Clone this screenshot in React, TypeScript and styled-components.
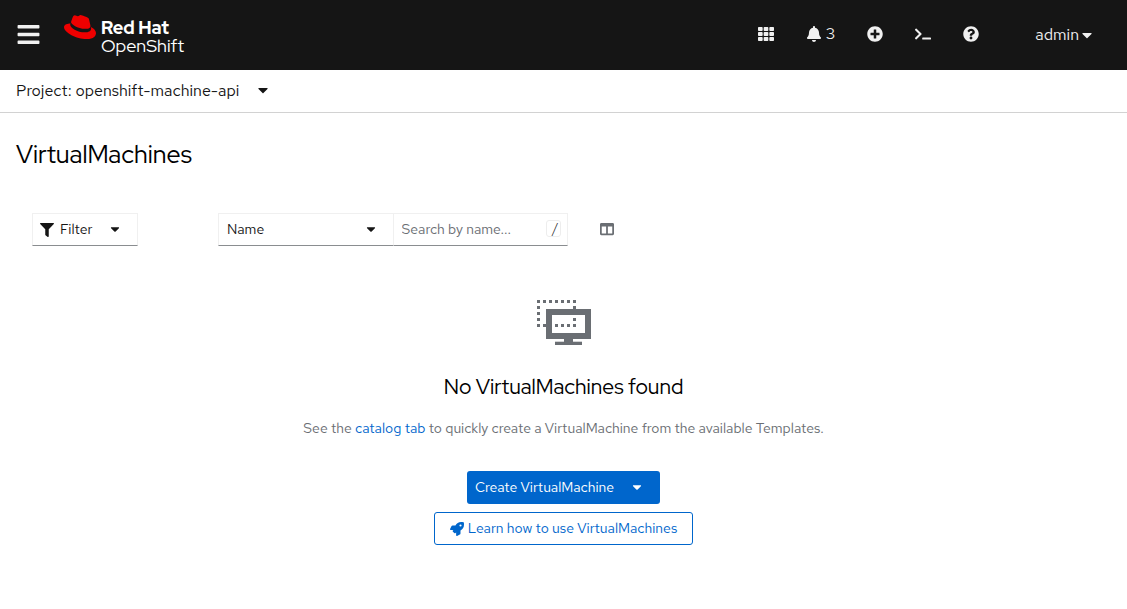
import React from "react";
import styled, { createGlobalStyle } from "styled-components";
import {
  FaBars,
  FaBell,
  FaCaretDown,
  FaColumns,
  FaFilter,
  FaPlusCircle,
  FaQuestionCircle,
  FaRedhat,
  FaRocket,
  FaTerminal,
  FaTh,
} from "react-icons/fa";

const bodyFont = `"Red Hat Text", "Open Sans", "Noto Sans", sans-serif`;
const displayFont = `"Red Hat Display", Lato, "Open Sans", sans-serif`;

const GlobalStyle = createGlobalStyle`
  *, *::before, *::after { box-sizing: border-box; }
  body {
    margin: 0;
    background: #fff;
    color: #151515;
    font-family: ${bodyFont};
    font-size: 14px;
    font-weight: 400;
    line-height: 21px;
  }
  button, input, select { font: inherit; color: inherit; }
  svg { display: block; flex: none; }
`;

const Masthead = styled.header`
  display: flex;
  align-items: center;
  height: 70px;
  padding: 0 32px 2px 16px;
  background: #151515;
  color: #f0f0f0;
`;

const PlainButton = styled.button`
  display: flex;
  align-items: center;
  gap: 4px;
  padding: 0;
  border: 0;
  background: none;
  font-size: 16px;
  line-height: 24px;
  cursor: pointer;
`;

const Caret = styled(FaCaretDown)`
  margin-bottom: 2px;
`;

const Brand = styled.a`
  display: flex;
  align-items: flex-start;
  gap: 5px;
  margin-left: 23px;
  color: #fff;
  text-decoration: none;
`;

const Hat = styled(FaRedhat)`
  color: #e00;
  margin-top: -2px;
`;

const BrandText = styled.span`
  display: flex;
  flex-direction: column;
  padding-top: 6px;
  font-family: ${displayFont};
  font-size: 18px;
  font-weight: 400;
  line-height: 18px;
`;

const BrandName = styled.strong`
  font-weight: 800;
`;

const Tools = styled.nav`
  display: flex;
  align-items: center;
  gap: 32px;
  margin-left: auto;
`;

const UserButton = styled(PlainButton)`
  gap: 0;
  margin-left: 24px;
  padding-top: 2px;
`;

const ProjectBar = styled.div`
  display: flex;
  padding: 9px 16px;
  border-bottom: 1px solid #d2d2d2;
`;

const ProjectButton = styled(PlainButton)`
  gap: 16px;
`;

const PageTitle = styled.h1`
  margin: 0;
  padding: 24px 16px;
  color: #000;
  font-family: ${displayFont};
  font-size: 25px;
  font-weight: 400;
  line-height: 36px;
`;

const Toolbar = styled.div`
  display: flex;
  flex-wrap: wrap;
  align-items: center;
  padding: 16px 32px;
`;

const FilterButton = styled.button`
  display: flex;
  align-items: center;
  gap: 6px;
  width: 106px;
  height: 33px;
  margin-right: 80px;
  padding: 0 7px;
  border: 1px solid #f0f0f0;
  border-bottom-color: #8a8d90;
  background: #fff;
  cursor: pointer;
`;

const FilterCaret = styled(Caret)`
  margin-left: 10px;
`;

const SearchGroup = styled.div`
  display: flex;
  width: 350px;
  margin-right: 32px;
`;

const Field = styled.label`
  display: flex;
  flex: 1;
  align-items: center;
  min-width: 0;
  height: 33px;
  padding: 0 6px 0 8px;
  border: 1px solid #f0f0f0;
  border-bottom-color: #8a8d90;
  & + & { border-left: 0; }
`;

const AttributeSelect = styled.select`
  flex: 1;
  min-width: 0;
  height: 31px;
  padding: 0;
  border: 0;
  outline: 0;
  appearance: none;
  background: none;
`;

const SelectCaret = styled(Caret)`
  margin-right: 9px;
`;

const SearchInput = styled.input`
  flex: 1;
  min-width: 0;
  padding: 0;
  border: 0;
  outline: 0;
  background: none;
  &::placeholder { color: #6a6e73; opacity: 1; }
`;

const Shortcut = styled.kbd`
  width: 15px;
  height: 17px;
  margin-bottom: 2px;
  padding-left: 4px;
  border: 1px solid #ededed;
  border-radius: 3px;
  font-family: ${bodyFont};
  font-size: 14px;
  font-weight: 300;
  line-height: 15px;
  text-align: center;
`;

const ColumnsButton = styled(PlainButton)`
  padding-bottom: 2px;
  color: #6a6e73;
`;

const EmptyState = styled.section`
  display: flex;
  flex-direction: column;
  align-items: center;
  padding: 38px 32px 64px;
  text-align: center;
`;

const EmptyTitle = styled.h2`
  margin: 27px 0 0;
  color: #000;
  font-family: ${displayFont};
  font-size: 21px;
  font-weight: 400;
  line-height: 30px;
`;

const EmptyText = styled.p`
  margin: 16px 0 32px;
  color: #6a6e73;
`;

const TextLink = styled.a`
  color: #06c;
  text-decoration: none;
`;

const CreateButton = styled.button`
  display: flex;
  align-items: center;
  gap: 16px;
  height: 33px;
  padding: 0 16px 0 8px;
  border: 0;
  border-radius: 3px;
  background: #06c;
  color: #fff;
  cursor: pointer;
`;

const LearnButton = styled.button`
  display: flex;
  align-items: center;
  gap: 4px;
  height: 33px;
  margin-top: 8px;
  padding: 0 15px;
  border: 1px solid #06c;
  border-radius: 3px;
  background: #fff;
  color: #06c;
  cursor: pointer;
`;

const dots = [
  ...[0, 6, 12, 18, 24, 30, 36].map((x) => [x, 0]),
  ...[6, 12, 18, 24].map((y) => [0, y]),
  ...[6, 18, 24, 30, 36].map((x) => [x, 24]),
  [36, 6],
  [36, 18],
];

function VirtualMachineIcon() {
  return (
    <svg width="54" height="45" viewBox="0 0 54 45" fill="#6a6e73" shapeRendering="crispEdges" aria-hidden="true">
      {dots.map(([x, y]) => (
        <rect key={`${x}-${y}`} x={x} y={y} width="3" height="3" />
      ))}
      <path fillRule="evenodd" d="M9 9h45v30H36v3h9v3H18v-3h9v-3H9zM15 15v18h33V15z" />
      <path d="M18 41h9v1h-9zM36 41h9v1h-9z" opacity="0.3" />
    </svg>
  );
}

export default function App() {
  return (
    <>
      <GlobalStyle />
      <Masthead>
        <PlainButton aria-label="Global navigation">
          <FaBars size={25} />
        </PlainButton>
        <Brand href="#">
          <Hat size={32} />
          <BrandText>
            <BrandName>Red Hat</BrandName>
            <span>OpenShift</span>
          </BrandText>
        </Brand>
        <Tools aria-label="Utilities">
          <PlainButton aria-label="Applications"><FaTh size={16} /></PlainButton>
          <PlainButton aria-label="3 notifications"><FaBell size={16} />3</PlainButton>
          <PlainButton aria-label="Quick create"><FaPlusCircle size={16} /></PlainButton>
          <PlainButton aria-label="Command line terminal"><FaTerminal size={16} /></PlainButton>
          <PlainButton aria-label="Help"><FaQuestionCircle size={16} /></PlainButton>
          <UserButton>admin<FaCaretDown size={16} /></UserButton>
        </Tools>
      </Masthead>
      <ProjectBar>
        <ProjectButton>Project: openshift-machine-api<Caret size={16} /></ProjectButton>
      </ProjectBar>
      <main>
        <PageTitle>VirtualMachines</PageTitle>
        <Toolbar>
          <FilterButton>
            <FaFilter size={14} />
            Filter
            <FilterCaret size={14} />
          </FilterButton>
          <SearchGroup>
            <Field>
              <AttributeSelect aria-label="Search attribute" defaultValue="Name">
                <option>Name</option>
                <option>Label</option>
              </AttributeSelect>
              <SelectCaret size={14} />
            </Field>
            <Field>
              <SearchInput type="text" aria-label="Search by name" placeholder="Search by name..." />
              <Shortcut>/</Shortcut>
            </Field>
          </SearchGroup>
          <ColumnsButton aria-label="Manage columns"><FaColumns size={14} /></ColumnsButton>
        </Toolbar>
        <EmptyState>
          <VirtualMachineIcon />
          <EmptyTitle>No VirtualMachines found</EmptyTitle>
          <EmptyText>
            See the <TextLink href="#catalog">catalog tab</TextLink> to quickly create a VirtualMachine from the available Templates.
          </EmptyText>
          <CreateButton>Create VirtualMachine<Caret size={14} /></CreateButton>
          <LearnButton><FaRocket size={14} />Learn how to use VirtualMachines</LearnButton>
        </EmptyState>
      </main>
    </>
  );
}
